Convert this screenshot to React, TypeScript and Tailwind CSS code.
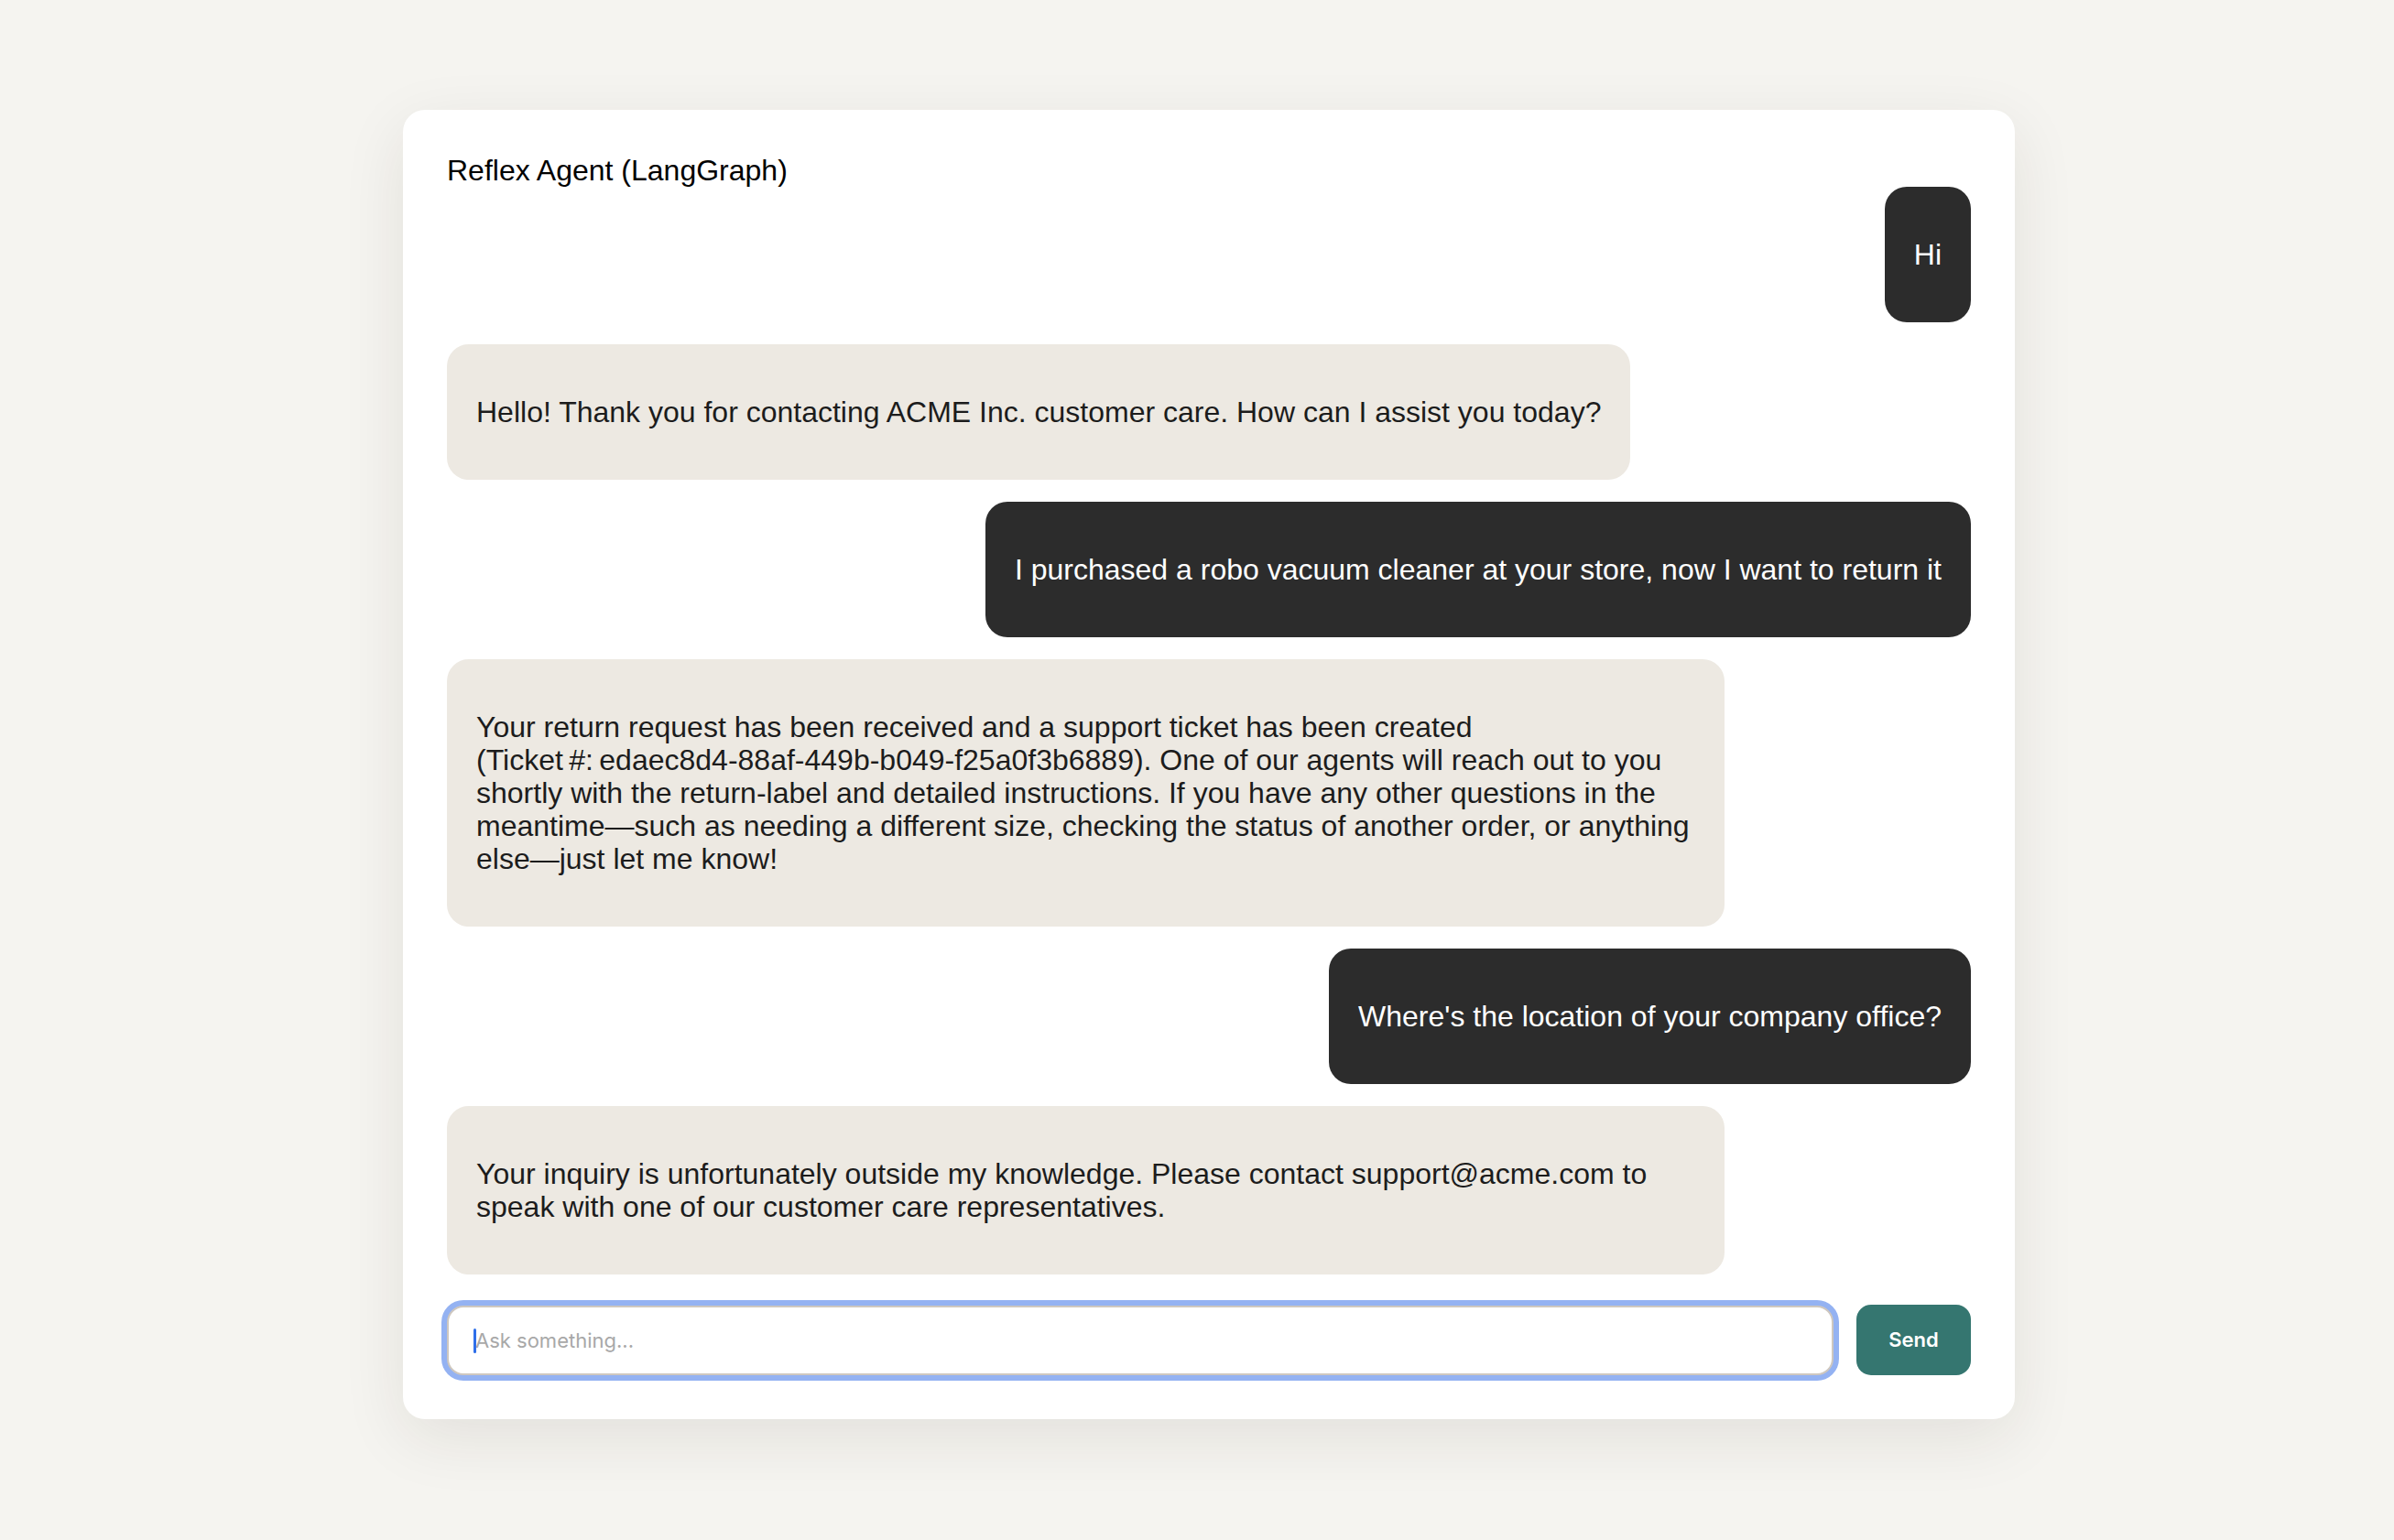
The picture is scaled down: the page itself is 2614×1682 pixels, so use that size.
import { memo } from 'react'

type Message = { role: 'user' | 'assistant'; text: string }

const MESSAGES: Message[] = [
  { role: 'user', text: 'Hi' },
  {
    role: 'assistant',
    text: 'Hello! Thank you for contacting ACME Inc. customer care. How can I assist you today?',
  },
  {
    role: 'user',
    text: 'I purchased a robo vacuum cleaner at your store, now I want to return it',
  },
  {
    role: 'assistant',
    text: 'Your return request has been received and a support ticket has been created (Ticket\u202F#:\u202Fedaec8d4-88af-449b-b049-f25a0f3b6889). One of our agents will reach out to you shortly with the return-label and detailed instructions. If you have any other questions in the meantime—such as needing a different size, checking the status of another order, or anything else—just let me know!',
  },
  { role: 'user', text: "Where's the location of your company office?" },
  {
    role: 'assistant',
    text: 'Your inquiry is unfortunately outside my knowledge. Please contact support@acme.com to speak with one of our customer care representatives.',
  },
]

const BUBBLE_CLASSNAME =
  'rounded-[24px] px-[32px] py-[56px] text-[32px] leading-[36px] whitespace-pre-wrap'

const Bubble = memo(function Bubble({ role, text }: Message) {
  if (role === 'user') {
    return (
      <div className="flex justify-end">
        <div className={`${BUBBLE_CLASSNAME} bg-[#2c2c2c] text-white`}>
          {text}
        </div>
      </div>
    )
  }

  return (
    <div className="flex justify-start">
      <div
        className={`${BUBBLE_CLASSNAME} max-w-[1395px] bg-[#ede9e2] text-[#1c1c1c]`}
      >
        {text}
      </div>
    </div>
  )
})

export default function App() {
  return (
    <div className="min-h-[1682px] w-full bg-[#f5f4f0] pl-[440px] pt-[120px] font-['Liberation_Sans',Arial,sans-serif]">
      <div className="flex w-[1760px] flex-col rounded-[24px] bg-white p-[48px] shadow-[0_20px_70px_rgba(40,35,25,0.09)]">
        <h1 className="text-[32px] leading-[36px] font-normal text-black">
          Reflex Agent (LangGraph)
        </h1>

        <div className="flex flex-col gap-[24px]">
          {MESSAGES.map((m, i) => (
            <Bubble key={i} role={m.role} text={m.text} />
          ))}
        </div>

        <div className="mt-[33px] flex flex-row items-center gap-[25px] font-['Inter',sans-serif]">
          <div className="relative flex-1">
            <input
              type="text"
              placeholder="Ask something..."
              className="block h-[76px] w-full rounded-[18px] border-2 border-[#cec7bf] bg-white pl-[29px] text-[22px] text-[#222] shadow-[0_0_0_6px_#94b2f2] outline-none placeholder:text-[#a8a8a8]"
            />
            <span className="absolute top-[25px] left-[29px] h-[27px] w-[3px] rounded-full bg-[#2f6fe9]" />
          </div>
          <button
            type="button"
            className="h-[77px] w-[125px] rounded-[16px] bg-[#357670] text-[22px] font-semibold text-white"
          >
            Send
          </button>
        </div>
      </div>
    </div>
  )
}
